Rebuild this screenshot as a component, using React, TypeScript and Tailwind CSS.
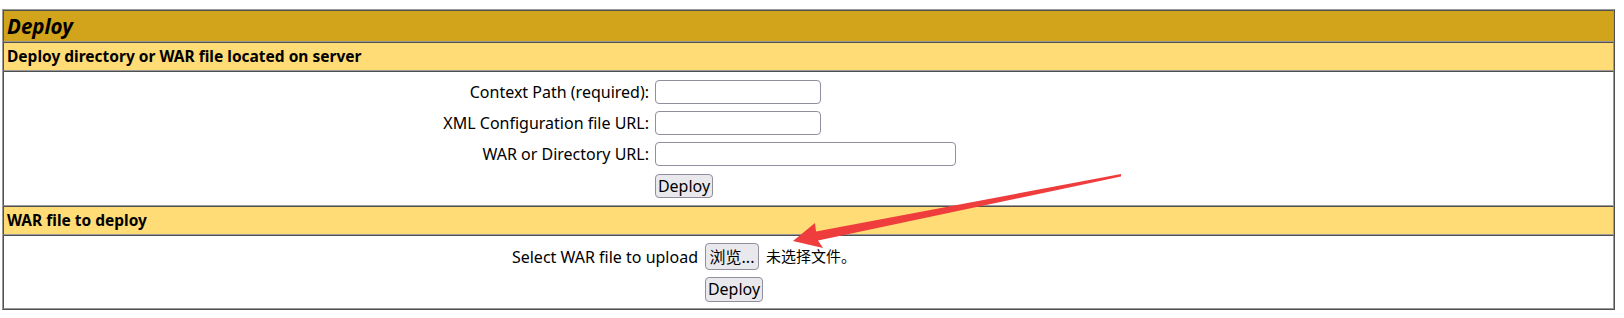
import React from "react";

const cellBorder =
  "border border-t-[#505050] border-l-[#505050] border-b-[#9a9a9a] border-r-[#9a9a9a]";

function Btn({ children, className = "" }: { children: React.ReactNode; className?: string }) {
  return (
    <button
      type="button"
      className={
        "flex items-center justify-center px-0 bg-[#e9e9ed] border border-[#8f8f9d] rounded-[4px] text-[16px] leading-none text-black " +
        className
      }
    >
      {children}
    </button>
  );
}

function TextInput({ w }: { w: string }) {
  return <input type="text" className={"h-[24px] bg-white border border-[#8f8f9d] rounded-[4px] " + w} />;
}

export default function App() {
  return (
    <div className="relative w-[1624px] h-[318px] bg-white pt-[9px] pl-[2px] font-['Noto_Sans',sans-serif] text-black">
      <div className="w-[1613px] border border-t-[#9a9a9a] border-l-[#9a9a9a] border-b-[#505050] border-r-[#505050]">
        <div className={cellBorder + " bg-[#D2A41C] h-[32px] px-[3px] flex items-center"}>
          <span className="text-[20.5px] font-bold italic leading-none">Deploy</span>
        </div>
        <div className={cellBorder + " bg-[#FFDC75] h-[29px] px-[3px] flex items-center"}>
          <span className="text-[15.5px] font-bold leading-none">Deploy directory or WAR file located on server</span>
        </div>
        <div className={cellBorder + " h-[135px] px-[3px] pt-[4px] pb-[5px]"}>
          <div className="grid grid-cols-[645px_1fr] auto-rows-[31px] items-center text-[16px]">
            <div className="text-right pr-[3px]">Context Path (required):</div>
            <div className="pl-[3px] flex items-center"><TextInput w="w-[166px]" /></div>
            <div className="text-right pr-[3px]">XML Configuration file URL:</div>
            <div className="pl-[3px] flex items-center"><TextInput w="w-[166px]" /></div>
            <div className="text-right pr-[3px]">WAR or Directory URL:</div>
            <div className="pl-[3px] flex items-center"><TextInput w="w-[301px]" /></div>
            <div />
            <div className="pl-[3px] flex items-center pt-[2px]">
              <Btn className="w-[58px] h-[24px] font-['Noto_Sans',sans-serif]">Deploy</Btn>
            </div>
          </div>
        </div>
        <div className={cellBorder + " bg-[#FFDC75] h-[29px] px-[3px] flex items-center"}>
          <span className="text-[15.5px] font-bold leading-none">WAR file to deploy</span>
        </div>
        <div className={cellBorder + " h-[74px] px-[3px] pt-[4px] pb-[3px]"}>
          <div className="grid grid-cols-[694px_1fr] grid-rows-[33px_32px] items-center text-[16px]">
            <div className="text-right pr-[3px]">Select WAR file to upload</div>
            <div className="pl-[4px] flex items-center gap-[7px]">
              <Btn className="w-[54px] h-[27px] font-['Noto_Sans','Noto_Sans_CJK_SC',sans-serif]">浏览...</Btn>
              <span className="text-[15px] font-['Noto_Sans_CJK_SC',sans-serif]">未选择文件。</span>
            </div>
            <div />
            <div className="pl-[4px] flex items-center">
              <Btn className="w-[58px] h-[25px] font-['Noto_Sans',sans-serif]">Deploy</Btn>
            </div>
          </div>
        </div>
      </div>
      <svg
        className="absolute left-0 top-0 pointer-events-none"
        width="1624"
        height="318"
        viewBox="0 0 1624 318"
      >
        <polygon
          points="1121,174 1121,176.5 818,240.5 823,248 793,241 815,223 816,231.5"
          fill="#ef3c3c"
        />
      </svg>
    </div>
  );
}
